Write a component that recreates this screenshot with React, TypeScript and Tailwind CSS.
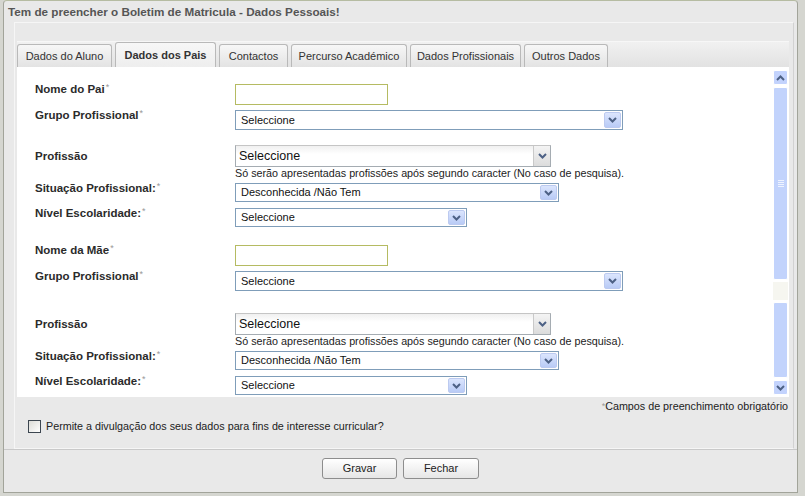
import React from 'react';

function Chevron({ up = false }: { up?: boolean }) {
  return (
    <svg width="9" height="6" viewBox="0 0 9 6" className="block">
      <path
        d={up ? 'M1 5 L4.5 1.5 L8 5' : 'M1 1 L4.5 4.5 L8 1'}
        fill="none"
        stroke="#4d6185"
        strokeWidth="2"
      />
    </svg>
  );
}

function DropButton() {
  return (
    <div className="flex h-full w-[17px] items-center justify-center rounded-[2px] border border-[#bccaf0] bg-gradient-to-b from-[#dbe5fd] to-[#b9cbf6]">
      <Chevron />
    </div>
  );
}

function Select({ className, value }: { className: string; value: string }) {
  return (
    <div className={`flex items-stretch border border-[#7f9db9] bg-white p-px ${className}`}>
      <span className="flex flex-1 items-center pl-[4px] text-[11px] text-[#111]">{value}</span>
      <DropButton />
    </div>
  );
}

function Combo() {
  return (
    <div className="flex h-[22px] w-[316px] items-stretch border border-[#a5acb2] border-t-[#c5c5c5] bg-gradient-to-b from-[#f0f0f0] to-white to-40%">
      <span className="flex flex-1 items-center pl-[3px] text-[12.5px] text-[#111]">Seleccione</span>
      <div className="flex w-[17px] items-center justify-center border-l border-[#c9c9c9] bg-gradient-to-b from-[#f4f4f4] to-[#dcdcdc]">
        <Chevron />
      </div>
    </div>
  );
}

function TextInput() {
  return <div className="h-[21px] w-[153px] border border-[#b5bb62] bg-white" />;
}

function Label({ text, req = true, cls = '' }: { text: string; req?: boolean; cls?: string }) {
  return (
    <div className={`w-[200px] shrink-0 text-[11.5px] font-bold leading-[13px] text-[#2b2b2b] ${cls}`}>
      {text}
      {req && <sup className="relative -top-[3px] ml-px text-[9px] font-normal text-[#999]">*</sup>}
    </div>
  );
}

function ParentBlock({ nome, first }: { nome: string; first: boolean }) {
  return (
    <div className="flex flex-col">
      <div className={`flex items-start ${first ? 'mt-[17px]' : 'mt-[18px]'}`}>
        <Label text={nome} cls="-mt-px" />
        <TextInput />
      </div>
      <div className="mt-[5px] flex items-start">
        <Label text="Grupo Profissional" cls="-mt-px" />
        <Select className="h-[20px] w-[388px]" value="Seleccione" />
      </div>
      <div className={`flex items-center ${first ? 'mt-[15px]' : 'mt-[22px]'}`}>
        <Label text="Profissão" req={false} />
        <Combo />
      </div>
      <div className="ml-[200px] h-[13px] text-[10.75px] leading-[13px] text-[#222]">
        Só serão apresentadas profissões após segundo caracter (No caso de pesquisa).
      </div>
      <div className="mt-[3px] flex items-start">
        <Label text="Situação Profissional:" cls="-mt-px" />
        <Select className="h-[19px] w-[324px]" value="Desconhecida /Não Tem" />
      </div>
      <div className="mt-[6px] flex items-start">
        <Label text="Nível Escolaridade:" cls="-mt-px" />
        <Select className="h-[19px] w-[232px]" value="Seleccione" />
      </div>
    </div>
  );
}

function Scrollbar() {
  return (
    <div className="mr-px mt-[3px] flex w-[15px] flex-col gap-[2px] pb-[2px]">
      <div className="flex h-[15px] items-center justify-center rounded-[2px] border border-white bg-[#c3d3fd]">
        <Chevron up />
      </div>
      <div className="flex h-[193px] items-center justify-center rounded-[2px] border border-white bg-[#c2d3fc]">
        <div className="flex flex-col gap-[1px]">
          <div className="h-px w-[6px] bg-[#eef3ff]" />
          <div className="h-px w-[6px] bg-[#eef3ff]" />
          <div className="h-px w-[6px] bg-[#eef3ff]" />
          <div className="h-px w-[6px] bg-[#eef3ff]" />
        </div>
      </div>
      <div className="h-[18px] bg-[#f6f6f0]" />
      <div className="flex-1 rounded-[2px] border border-white bg-[#c2d3fc]" />
      <div className="flex h-[15px] items-center justify-center rounded-[2px] border border-white bg-[#c3d3fd]">
        <Chevron />
      </div>
    </div>
  );
}

const tabs = [
  { label: 'Dados do Aluno', w: 'w-[95px]' },
  { label: 'Dados dos Pais', w: 'w-[101px]', active: true },
  { label: 'Contactos', w: 'w-[69px]' },
  { label: 'Percurso Académico', w: 'w-[116px]' },
  { label: 'Dados Profissionais', w: 'w-[111px]' },
  { label: 'Outros Dados', w: 'w-[84px]' },
];

export default function App() {
  return (
    <div className="flex h-[496px] w-[805px] overflow-hidden bg-[#d5d6d0] font-['Liberation_Sans',Arial,sans-serif]">
      <div className="ml-[3px] flex h-[493px] w-[795px] flex-col rounded-t-[4px] border border-[#a2a49a] border-t-[#b6bca2] bg-[#e9e9e9]">
        {/* title */}
        <div className="flex h-[21px] items-center px-[4px] text-[11.7px] font-bold text-[#555]">
          Tem de preencher o Boletim de Matricula - Dados Pessoais!
        </div>
        <div className="ml-[10px] mr-[3px] flex h-[427px] flex-col border border-[#f6f6f6] border-r-[#d2d2d2]">
          <div className="h-[18px]" />
          {/* tab strip */}
          <div className="mx-[2px] mr-[4px] flex h-[26px] items-end gap-[3px] border-t border-[#f7f7f7] bg-gradient-to-b from-[#f1f1f1] to-[#e2e2e2]">
            {tabs.map((t) => (
              <div
                key={t.label}
                className={`flex items-center justify-center rounded-t-[3px] border border-b-0 border-[#b9b9b9] text-[11px] text-[#333] ${t.w} ${
                  t.active
                    ? 'h-[25px] bg-gradient-to-b from-[#f7f7f7] to-[#eeeeee] text-[11.5px] font-bold'
                    : 'h-[23px] bg-gradient-to-b from-[#f7f7f7] to-[#e3e3e3]'
                }`}
              >
                {t.label}
              </div>
            ))}
          </div>
          {/* content */}
          <div className="mx-[2px] mr-[4px] flex h-[330px] bg-white">
            <div className="flex flex-1 flex-col pl-[18px]">
              <ParentBlock nome="Nome do Pai" first />
              <ParentBlock nome="Nome da Mãe" first={false} />
            </div>
            <Scrollbar />
          </div>
          <div className="mr-[5px] mt-[2px] text-right text-[10.75px] leading-[14px] text-[#222]">
            <sup className="relative -top-[1px] text-[9px] text-[#999]">*</sup>Campos de preenchimento obrigatório
          </div>
          <div className="ml-[13px] mt-[5px] flex items-center gap-[5px] text-[10.75px] text-[#222]">
            <div className="h-[13px] w-[13px] border border-[#3c4650] bg-gradient-to-br from-[#dcdcd7] to-white" />
            Permite a divulgação dos seus dados para fins de interesse curricular?
          </div>
        </div>
        {/* buttons */}
        <div className="flex flex-1 items-center justify-center gap-[6px] border-t border-[#c9c9c9] pb-[5px]">
          <button className="h-[21px] w-[75px] rounded-[3px] border border-[#8d8d8d] bg-gradient-to-b from-white to-[#e6e6e6] text-[11px] text-[#222]">
            Gravar
          </button>
          <button className="h-[21px] w-[76px] rounded-[3px] border border-[#8d8d8d] bg-gradient-to-b from-white to-[#e6e6e6] text-[11px] text-[#222]">
            Fechar
          </button>
        </div>
      </div>
    </div>
  );
}
